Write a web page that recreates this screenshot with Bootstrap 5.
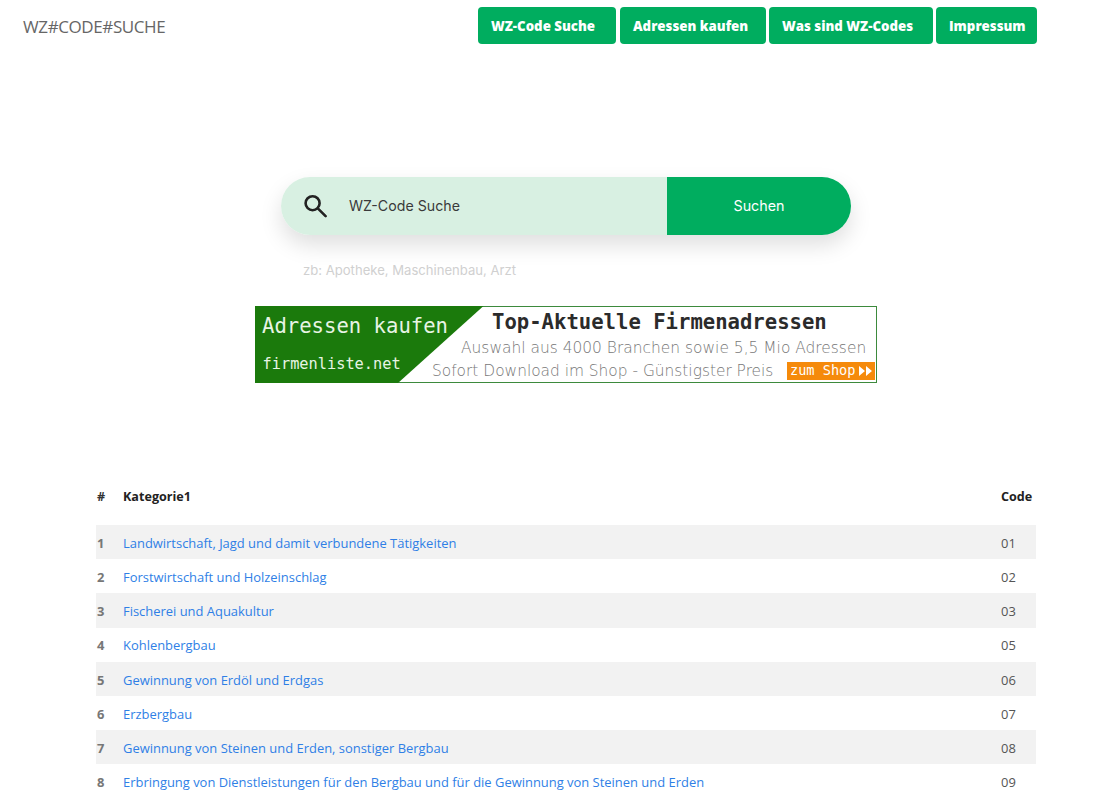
<!DOCTYPE html>
<html lang="de">
<head>
    <meta charset="UTF-8">
    <meta name="viewport" content="width=device-width, initial-scale=1.0">
    <title>WZ-Code Suche</title>
    <!-- Bootstrap CSS -->
    <link href="https://cdn.jsdelivr.net/npm/bootstrap@5.3.0/dist/css/bootstrap.min.css" rel="stylesheet">
    <style>
        body { font-family: "Open Sans", "Noto Sans", sans-serif; background: #fff; overflow: hidden; }
        .top-bar { height: 51px; padding: 7px 63px 7px 23px; }
        .site-brand { font-size: 17px; color: #666; letter-spacing: -.4px; text-decoration: none; margin-top: 3px; }
        .nav-group { gap: 3px; }
        .nav-btn { background: #00ad5f; color: #fff; font-size: 13.25px; font-weight: 800; height: 37px; padding: 2px 0 0 13px; border: 0; border-radius: 4px; display: flex; align-items: center; text-decoration: none; white-space: nowrap; }
        .nav-btn:hover { background: #00ad5f; color: #fff; }
        .nav-suche { width: 138px; margin-right: 1px; }
        .nav-kaufen { width: 146px; }
        .nav-was { width: 164px; }
        .nav-imp { width: 101px; }
        .page-wrap { width: 940px; margin-left: 96px; }
        .search-box { width: 570px; height: 58px; margin: 126px auto 0; border-radius: 29px; box-shadow: 0 10px 22px rgba(0, 0, 0, .13); overflow: hidden; }
        .search-field { flex: 1; background: #d8f0e2; padding-left: 22px; gap: 22px; font-family: "Inter", sans-serif; font-size: 14.2px; color: #3a3a3a; }
        .search-go { width: 184px; background: #00ad5f; color: #fff; font-family: "Inter", sans-serif; font-size: 14.3px; border: 0; padding: 0; }
        .search-hint { width: 570px; margin: 26px auto 0; padding-left: 22px; font-family: "Inter", sans-serif; font-size: 13.1px; line-height: 18px; color: #d0d0d0; }
        .ad-banner { display: block; width: 622px; height: 77px; margin: 27px auto 0; }
        .ad-mono { font-family: "DejaVu Sans Mono", monospace; }
        .ad-sans { font-family: "DejaVu Sans", sans-serif; }
        .code-table { margin: 96px 0 0; font-size: 12.95px; --bs-table-bg: transparent; --bs-table-striped-bg: #f2f2f2; --bs-table-striped-color: #555; color: #555; }
        .code-table th, .code-table td { border: 0; padding: 3px 8px 0; height: 34.2px; vertical-align: middle; }
        .code-table thead th { color: #222; height: 46px; font-size: 12.6px; font-weight: 700; padding: 0 0 10px; }
        .code-table .num-col { width: 27px; padding-left: 1px; padding-right: 0; font-weight: 700; }
        .code-table.table-striped > tbody > tr > .num-col { color: #777; }
        .code-table thead .num-col { color: #333; padding-left: 1px; }
        .code-table .code-col { width: 35px; padding-left: 0; padding-right: 0; }
        .code-table .cat-col { padding-left: 0; }
        .code-table a { color: #2f7fe6; text-decoration: none; }
    </style>
</head>
<body>
    <!-- Kopfzeile -->
    <nav class="top-bar d-flex justify-content-between align-items-center">
        <a href="#" class="site-brand">WZ#CODE#SUCHE</a>
        <div class="d-flex nav-group">
            <a href="#" class="nav-btn nav-suche">WZ-Code Suche</a>
            <a href="#" class="nav-btn nav-kaufen">Adressen kaufen</a>
            <a href="#" class="nav-btn nav-was">Was sind WZ-Codes</a>
            <a href="#" class="nav-btn nav-imp">Impressum</a>
        </div>
    </nav>

    <div class="page-wrap">
        <!-- Suche -->
        <div class="search-box d-flex">
            <div class="search-field d-flex align-items-center">
                <svg width="24" height="24" viewBox="0 0 24 24" fill="none" stroke="#222" stroke-width="2.6" aria-hidden="true">
                    <circle cx="9.6" cy="9.2" r="7"/>
                    <path d="M14.8 14.4 L22.6 22.2" stroke-linecap="round"/>
                </svg>
                <span>WZ-Code Suche</span>
            </div>
            <button type="button" class="search-go">Suchen</button>
        </div>
        <div class="search-hint">zb: Apotheke, Maschinenbau, Arzt</div>

        <!-- Banner -->
        <svg class="ad-banner" viewBox="0 0 622 77" role="img">
            <rect x=".5" y=".5" width="621" height="76" fill="#fff" stroke="#3d8a3d"/>
            <polygon points="0,0 228.5,0 143,77 0,77" fill="#1b7a0c"/>
            <text x="7" y="27" class="ad-mono" font-size="20.6" fill="#e8f4e4">Adressen kaufen</text>
            <text x="7.5" y="63" class="ad-mono" font-size="15.3" fill="#e8f4e4">firmenliste.net</text>
            <text x="237" y="23" class="ad-mono" font-size="20.6" font-weight="700" fill="#2b2b2b">Top-Aktuelle Firmenadressen</text>
            <text x="206" y="47" class="ad-sans" font-size="15.45" font-weight="200" fill="#777">Auswahl aus 4000 Branchen sowie 5,5 Mio Adressen</text>
            <text x="177" y="70" class="ad-sans" font-size="15.4" font-weight="200" fill="#777">Sofort Download im Shop - Günstigster Preis</text>
            <rect x="532" y="56" width="88" height="18" fill="#f58a0b"/>
            <text x="535" y="69" class="ad-mono" font-size="13.6" fill="#fff">zum Shop</text>
            <path d="M604 60 L610 65 L604 70 Z M611 60 L617 65 L611 70 Z" fill="#fff"/>
        </svg>

        <!-- Tabelle -->
        <table class="table table-striped code-table">
            <thead>
                <tr><th class="num-col">#</th><th class="cat-col">Kategorie1</th><th class="code-col">Code</th></tr>
            </thead>
            <tbody>
                <tr><td class="num-col">1</td><td class="cat-col"><a href="#">Landwirtschaft, Jagd und damit verbundene Tätigkeiten</a></td><td class="code-col">01</td></tr>
                <tr><td class="num-col">2</td><td class="cat-col"><a href="#">Forstwirtschaft und Holzeinschlag</a></td><td class="code-col">02</td></tr>
                <tr><td class="num-col">3</td><td class="cat-col"><a href="#">Fischerei und Aquakultur</a></td><td class="code-col">03</td></tr>
                <tr><td class="num-col">4</td><td class="cat-col"><a href="#">Kohlenbergbau</a></td><td class="code-col">05</td></tr>
                <tr><td class="num-col">5</td><td class="cat-col"><a href="#">Gewinnung von Erdöl und Erdgas</a></td><td class="code-col">06</td></tr>
                <tr><td class="num-col">6</td><td class="cat-col"><a href="#">Erzbergbau</a></td><td class="code-col">07</td></tr>
                <tr><td class="num-col">7</td><td class="cat-col"><a href="#">Gewinnung von Steinen und Erden, sonstiger Bergbau</a></td><td class="code-col">08</td></tr>
                <tr><td class="num-col">8</td><td class="cat-col"><a href="#">Erbringung von Dienstleistungen für den Bergbau und für die Gewinnung von Steinen und Erden</a></td><td class="code-col">09</td></tr>
            </tbody>
        </table>
    </div>

    <!-- Bootstrap JS Bundle with Popper -->
    <script src="https://cdn.jsdelivr.net/npm/bootstrap@5.3.0/dist/js/bootstrap.bundle.min.js"></script>
</body>
</html>
